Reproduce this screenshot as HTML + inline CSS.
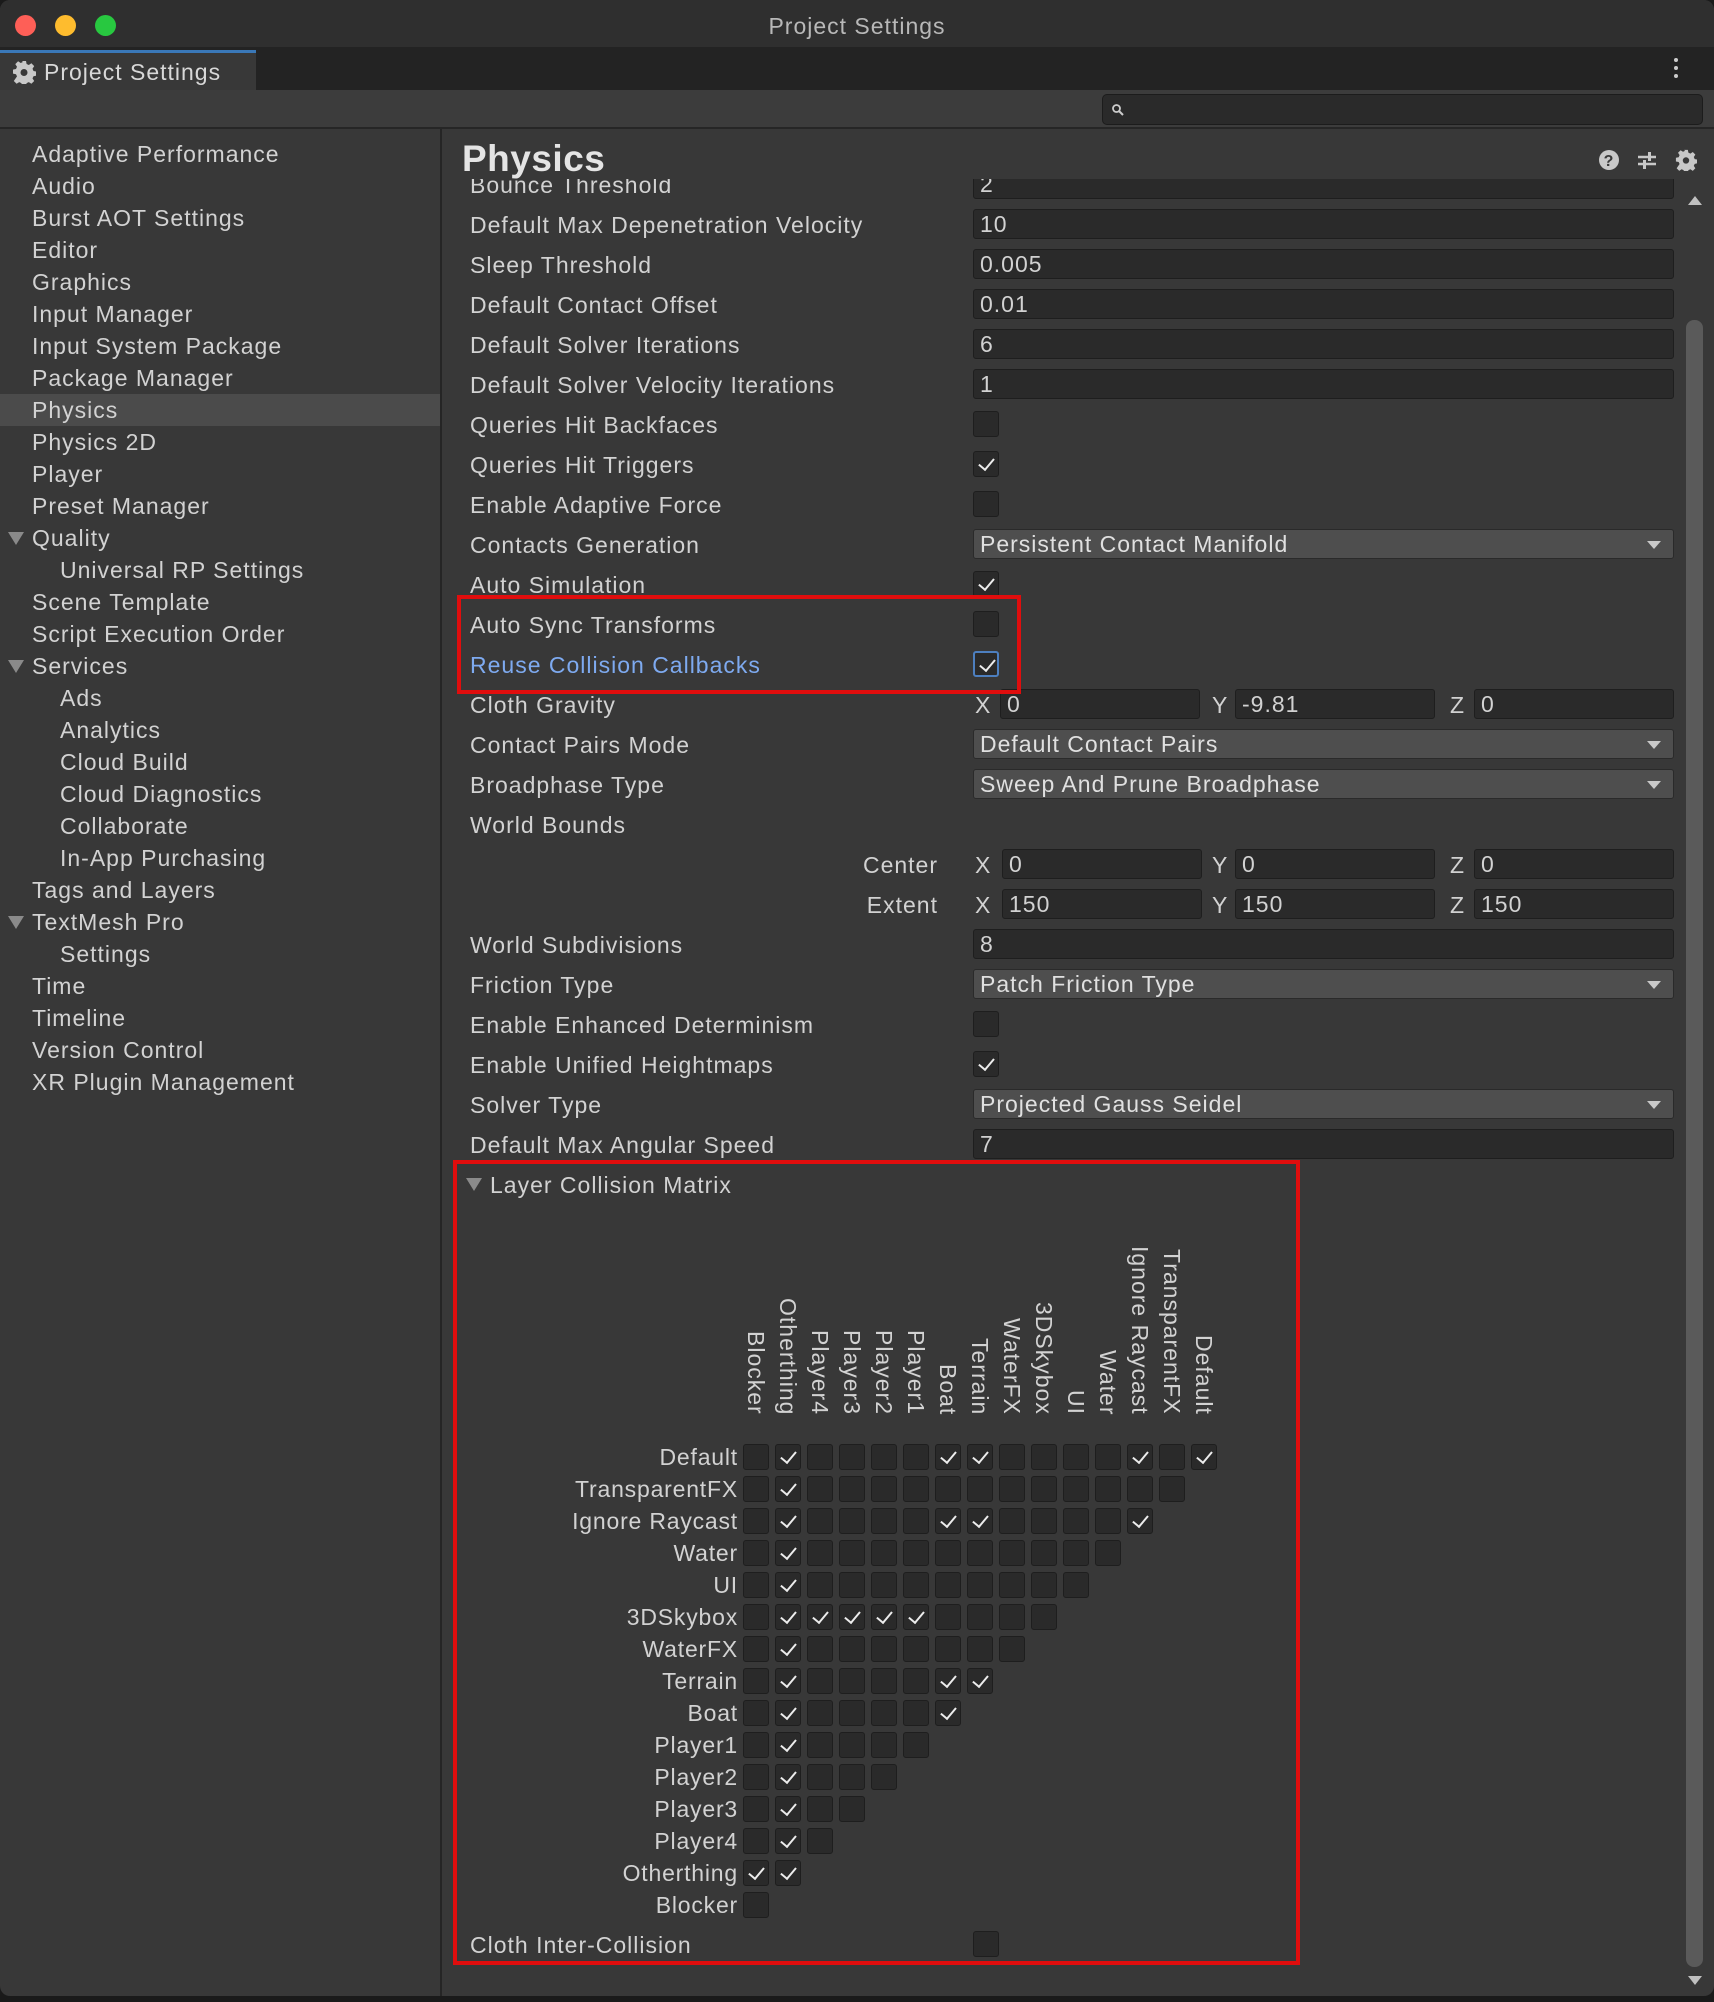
<!DOCTYPE html>
<html><head><meta charset="utf-8"><style>
*{box-sizing:border-box;margin:0;padding:0}
body{width:1714px;height:2002px;background:#1a1a1a;position:relative;overflow:hidden;font-family:"Liberation Sans",sans-serif;color:#d2d2d2;font-size:23px;letter-spacing:1px}
.a{position:absolute}
.win{position:absolute;left:0;top:0;width:1714px;height:1996px;background:#383838;border-radius:10px;overflow:hidden}
.lp div{height:32px;line-height:32px;padding-left:32px;white-space:nowrap}
.lp .in{padding-left:60px}
.lp .sel{background:#4b4b4b}
.tri{position:absolute;left:8px;width:0;height:0;border-left:8px solid transparent;border-right:8px solid transparent;border-top:13px solid #8a8a8a;margin-top:10px}
.lb{position:absolute;left:470px;height:40px;line-height:40px;white-space:nowrap}
.f{position:absolute;left:973px;width:701px;height:30px;background:#2a2a2a;border:1px solid #1e1e1e;border-radius:3px;line-height:28px;padding-left:6px}
.dd{position:absolute;left:973px;width:701px;height:30px;background:#4e4e4e;border:1px solid #2a2a2a;border-radius:3px;line-height:28px;padding-left:6px;color:#e0e0e0}
.dd::after{content:'';position:absolute;right:12px;top:11px;border-left:7px solid transparent;border-right:7px solid transparent;border-top:8px solid #c8c8c8}
.cb{position:absolute;left:973px;width:26px;height:26px;background:#2a2a2a;border:1px solid #1e1e1e;border-radius:3px}
.k::after,.mr i.k::after{content:'';position:absolute;left:8px;top:3px;width:7px;height:13px;border:solid #ececec;border-width:0 2.5px 2.5px 0;transform:rotate(40deg)}
.x{position:absolute;height:40px;line-height:40px}
.xf{position:absolute;width:200px;height:30px;background:#2a2a2a;border:1px solid #1e1e1e;border-radius:3px;line-height:28px;padding-left:6px}
.mr{position:absolute;left:743px;height:26px;white-space:nowrap;font-size:0}
.mr i{display:inline-block;position:relative;width:26px;height:26px;margin-right:6px;background:#2a2a2a;border:1px solid #1e1e1e;border-radius:3px}
.rl{position:absolute;left:338px;width:400px;text-align:right;height:32px;line-height:32px;white-space:nowrap;letter-spacing:0.8px}
.cl{position:absolute;width:26px;bottom:581px;writing-mode:vertical-rl;line-height:26px;white-space:nowrap}
.red{position:absolute;border:4px solid #e00d0d}
</style></head><body>
<div class="win">
<div class="a" style="left:0;top:0;width:1714px;height:47px;background:#2f2f2f"></div>
<div class="a" style="left:15px;top:15px;width:21px;height:21px;border-radius:50%;background:#fe5f57"></div>
<div class="a" style="left:55px;top:15px;width:21px;height:21px;border-radius:50%;background:#febc2e"></div>
<div class="a" style="left:95px;top:15px;width:21px;height:21px;border-radius:50%;background:#28c840"></div>
<div class="a" style="left:0;top:13px;width:1714px;text-align:center;font-size:23px;color:#b8b8b8">Project Settings</div>
<div class="a" style="left:0;top:47px;width:1714px;height:43px;background:#232323"></div>
<div class="a" style="left:0;top:50px;width:256px;height:40px;background:#383838;border-top:3px solid #3a78b8"></div>
<svg class="a" style="left:12px;top:60px" width="24" height="24" viewBox="0 0 24 24"><path fill="#c8c8c8" d="M10 1h4l.6 3 2.2 1 2.6-1.7 2.8 2.8L20.5 8.7l1 2.3 3 .6v4l-3 .6-1 2.2 1.7 2.6-2.8 2.8-2.6-1.7-2.2 1-.6 3h-4l-.6-3-2.2-1-2.6 1.7-2.8-2.8L5 16.4l-1-2.2-3-.6v-4l3-.6 1-2.3L3.3 4.1 6.1 1.3 8.7 3l2.2-1z"/><circle cx="12" cy="12.5" r="3.5" fill="#383838"/></svg>
<div class="a" style="left:44px;top:59px;font-size:23px;color:#d8d8d8">Project Settings</div>
<div class="a" style="left:1674px;top:58px;width:4px;height:4px;background:#ccc;border-radius:2px;box-shadow:0 8px 0 #ccc,0 16px 0 #ccc"></div>
<div class="a" style="left:0;top:90px;width:1714px;height:39px;background:#3c3c3c;border-bottom:2px solid #262626"></div>
<div class="a" style="left:1102px;top:94px;width:601px;height:31px;background:#2a2a2a;border:1px solid #1c1c1c;border-radius:5px"></div>
<svg class="a" style="left:1111px;top:103px" width="14" height="14" viewBox="0 0 14 14"><circle cx="5.5" cy="5.5" r="3.5" fill="none" stroke="#ccc" stroke-width="1.8"/><path d="M8 8l4 4" stroke="#ccc" stroke-width="2"/></svg>
<div class="a" style="left:440px;top:129px;width:2px;height:1870px;background:#252525"></div>
<div class="a lp" style="left:0;top:138px;width:440px">
<div>Adaptive Performance</div><div>Audio</div><div>Burst AOT Settings</div><div>Editor</div><div>Graphics</div><div>Input Manager</div><div>Input System Package</div><div>Package Manager</div><div class="sel">Physics</div><div>Physics 2D</div><div>Player</div><div>Preset Manager</div><div><span class="tri"></span>Quality</div><div class="in">Universal RP Settings</div><div>Scene Template</div><div>Script Execution Order</div><div><span class="tri"></span>Services</div><div class="in">Ads</div><div class="in">Analytics</div><div class="in">Cloud Build</div><div class="in">Cloud Diagnostics</div><div class="in">Collaborate</div><div class="in">In-App Purchasing</div><div>Tags and Layers</div><div><span class="tri"></span>TextMesh Pro</div><div class="in">Settings</div><div>Time</div><div>Timeline</div><div>Version Control</div><div>XR Plugin Management</div>
</div>
<div class="a" style="left:1686px;top:320px;width:17px;height:1647px;background:#5a5a5a;border-radius:8px"></div>
<div class="a" style="left:1688px;top:196px;border-left:7px solid transparent;border-right:7px solid transparent;border-bottom:9px solid #c0c0c0"></div>
<div class="a" style="left:1688px;top:1976px;border-left:7px solid transparent;border-right:7px solid transparent;border-top:9px solid #c0c0c0"></div>
<div class="lb" style="top:165px">Bounce Threshold</div><div class="f" style="top:169px">2</div>
<div class="a" style="left:443px;top:129px;width:1240px;height:50px;background:#383838"></div>
<div class="a" style="left:462px;top:138px;font-size:37px;font-weight:bold;color:#e4e4e4;letter-spacing:0.5px">Physics</div>
<svg class="a" style="left:1598px;top:149px" width="22" height="22" viewBox="0 0 22 22"><circle cx="11" cy="11" r="10" fill="#c8c8c8"/><text x="11" y="17" text-anchor="middle" font-size="16" font-weight="bold" fill="#383838" font-family="Liberation Sans">?</text></svg>
<svg class="a" style="left:1636px;top:149px" width="22" height="22" viewBox="0 0 22 22"><path d="M2 8h18M2 15h18" stroke="#c8c8c8" stroke-width="2.5"/><rect x="12" y="3" width="3" height="9" fill="#c8c8c8"/><rect x="7" y="11" width="3" height="9" fill="#c8c8c8"/></svg>
<svg class="a" style="left:1675px;top:149px" width="22" height="22" viewBox="0 0 24 24"><path fill="#c8c8c8" d="M10 1h4l.6 3 2.2 1 2.6-1.7 2.8 2.8L20.5 8.7l1 2.3 3 .6v4l-3 .6-1 2.2 1.7 2.6-2.8 2.8-2.6-1.7-2.2 1-.6 3h-4l-.6-3-2.2-1-2.6 1.7-2.8-2.8L5 16.4l-1-2.2-3-.6v-4l3-.6 1-2.3L3.3 4.1 6.1 1.3 8.7 3l2.2-1z"/><circle cx="12" cy="12.5" r="3.5" fill="#383838"/></svg>

<div class="lb" style="top:205px">Default Max Depenetration Velocity</div><div class="f" style="top:209px">10</div>
<div class="lb" style="top:245px">Sleep Threshold</div><div class="f" style="top:249px">0.005</div>
<div class="lb" style="top:285px">Default Contact Offset</div><div class="f" style="top:289px">0.01</div>
<div class="lb" style="top:325px">Default Solver Iterations</div><div class="f" style="top:329px">6</div>
<div class="lb" style="top:365px">Default Solver Velocity Iterations</div><div class="f" style="top:369px">1</div>
<div class="lb" style="top:405px">Queries Hit Backfaces</div><div class="cb" style="top:411px"></div>
<div class="lb" style="top:445px">Queries Hit Triggers</div><div class="cb k" style="top:451px"></div>
<div class="lb" style="top:485px">Enable Adaptive Force</div><div class="cb" style="top:491px"></div>
<div class="lb" style="top:525px">Contacts Generation</div><div class="dd" style="top:529px">Persistent Contact Manifold</div>
<div class="lb" style="top:565px">Auto Simulation</div><div class="cb k" style="top:571px"></div>
<div class="lb" style="top:605px">Auto Sync Transforms</div><div class="cb" style="top:611px"></div>
<div class="lb" style="top:645px;color:#7eaaf0">Reuse Collision Callbacks</div><div class="cb k" style="top:651px;border:2px solid #4d7fbf"></div>
<div class="lb" style="top:685px">Cloth Gravity</div>
<div class="x" style="left:975px;top:685px">X</div><div class="xf" style="left:1000px;top:689px">0</div>
<div class="x" style="left:1212px;top:685px">Y</div><div class="xf" style="left:1235px;top:689px">-9.81</div>
<div class="x" style="left:1450px;top:685px">Z</div><div class="xf" style="left:1474px;top:689px">0</div>
<div class="lb" style="top:725px">Contact Pairs Mode</div><div class="dd" style="top:729px">Default Contact Pairs</div>
<div class="lb" style="top:765px">Broadphase Type</div><div class="dd" style="top:769px">Sweep And Prune Broadphase</div>
<div class="lb" style="top:805px">World Bounds</div>
<div class="x" style="left:818px;top:845px;width:120px;text-align:right">Center</div>
<div class="x" style="left:975px;top:845px">X</div><div class="xf" style="left:1002px;top:849px">0</div>
<div class="x" style="left:1212px;top:845px">Y</div><div class="xf" style="left:1235px;top:849px">0</div>
<div class="x" style="left:1450px;top:845px">Z</div><div class="xf" style="left:1474px;top:849px">0</div>
<div class="x" style="left:818px;top:885px;width:120px;text-align:right">Extent</div>
<div class="x" style="left:975px;top:885px">X</div><div class="xf" style="left:1002px;top:889px">150</div>
<div class="x" style="left:1212px;top:885px">Y</div><div class="xf" style="left:1235px;top:889px">150</div>
<div class="x" style="left:1450px;top:885px">Z</div><div class="xf" style="left:1474px;top:889px">150</div>
<div class="lb" style="top:925px">World Subdivisions</div><div class="f" style="top:929px">8</div>
<div class="lb" style="top:965px">Friction Type</div><div class="dd" style="top:969px">Patch Friction Type</div>
<div class="lb" style="top:1005px">Enable Enhanced Determinism</div><div class="cb" style="top:1011px"></div>
<div class="lb" style="top:1045px">Enable Unified Heightmaps</div><div class="cb k" style="top:1051px"></div>
<div class="lb" style="top:1085px">Solver Type</div><div class="dd" style="top:1089px">Projected Gauss Seidel</div>
<div class="lb" style="top:1125px">Default Max Angular Speed</div><div class="f" style="top:1129px">7</div>
<div class="a" style="left:466px;top:1178px;border-left:8px solid transparent;border-right:8px solid transparent;border-top:13px solid #8a8a8a"></div>
<div class="lb" style="top:1165px;left:490px">Layer Collision Matrix</div>

<div class="cl" style="left:743px">Blocker</div>
<div class="cl" style="left:775px">Otherthing</div>
<div class="cl" style="left:807px">Player4</div>
<div class="cl" style="left:839px">Player3</div>
<div class="cl" style="left:871px">Player2</div>
<div class="cl" style="left:903px">Player1</div>
<div class="cl" style="left:935px">Boat</div>
<div class="cl" style="left:967px">Terrain</div>
<div class="cl" style="left:999px">WaterFX</div>
<div class="cl" style="left:1031px">3DSkybox</div>
<div class="cl" style="left:1063px">UI</div>
<div class="cl" style="left:1095px">Water</div>
<div class="cl" style="left:1127px">Ignore Raycast</div>
<div class="cl" style="left:1159px">TransparentFX</div>
<div class="cl" style="left:1191px">Default</div>

<div class="rl" style="top:1441px">Default</div>
<div class="rl" style="top:1473px">TransparentFX</div>
<div class="rl" style="top:1505px">Ignore Raycast</div>
<div class="rl" style="top:1537px">Water</div>
<div class="rl" style="top:1569px">UI</div>
<div class="rl" style="top:1601px">3DSkybox</div>
<div class="rl" style="top:1633px">WaterFX</div>
<div class="rl" style="top:1665px">Terrain</div>
<div class="rl" style="top:1697px">Boat</div>
<div class="rl" style="top:1729px">Player1</div>
<div class="rl" style="top:1761px">Player2</div>
<div class="rl" style="top:1793px">Player3</div>
<div class="rl" style="top:1825px">Player4</div>
<div class="rl" style="top:1857px">Otherthing</div>
<div class="rl" style="top:1889px">Blocker</div>

<div class="mr" style="top:1444px"><i></i><i class="k"></i><i></i><i></i><i></i><i></i><i class="k"></i><i class="k"></i><i></i><i></i><i></i><i></i><i class="k"></i><i></i><i class="k"></i></div>
<div class="mr" style="top:1476px"><i></i><i class="k"></i><i></i><i></i><i></i><i></i><i></i><i></i><i></i><i></i><i></i><i></i><i></i><i></i></div>
<div class="mr" style="top:1508px"><i></i><i class="k"></i><i></i><i></i><i></i><i></i><i class="k"></i><i class="k"></i><i></i><i></i><i></i><i></i><i class="k"></i></div>
<div class="mr" style="top:1540px"><i></i><i class="k"></i><i></i><i></i><i></i><i></i><i></i><i></i><i></i><i></i><i></i><i></i></div>
<div class="mr" style="top:1572px"><i></i><i class="k"></i><i></i><i></i><i></i><i></i><i></i><i></i><i></i><i></i><i></i></div>
<div class="mr" style="top:1604px"><i></i><i class="k"></i><i class="k"></i><i class="k"></i><i class="k"></i><i class="k"></i><i></i><i></i><i></i><i></i></div>
<div class="mr" style="top:1636px"><i></i><i class="k"></i><i></i><i></i><i></i><i></i><i></i><i></i><i></i></div>
<div class="mr" style="top:1668px"><i></i><i class="k"></i><i></i><i></i><i></i><i></i><i class="k"></i><i class="k"></i></div>
<div class="mr" style="top:1700px"><i></i><i class="k"></i><i></i><i></i><i></i><i></i><i class="k"></i></div>
<div class="mr" style="top:1732px"><i></i><i class="k"></i><i></i><i></i><i></i><i></i></div>
<div class="mr" style="top:1764px"><i></i><i class="k"></i><i></i><i></i><i></i></div>
<div class="mr" style="top:1796px"><i></i><i class="k"></i><i></i><i></i></div>
<div class="mr" style="top:1828px"><i></i><i class="k"></i><i></i></div>
<div class="mr" style="top:1860px"><i class="k"></i><i class="k"></i></div>
<div class="mr" style="top:1892px"><i></i></div>

<div class="lb" style="top:1925px">Cloth Inter-Collision</div><div class="cb" style="top:1931px"></div>

<div class="red" style="left:457px;top:595px;width:564px;height:99px"></div>
<div class="red" style="left:453px;top:1160px;width:847px;height:805px"></div>
</div>
</body></html>
